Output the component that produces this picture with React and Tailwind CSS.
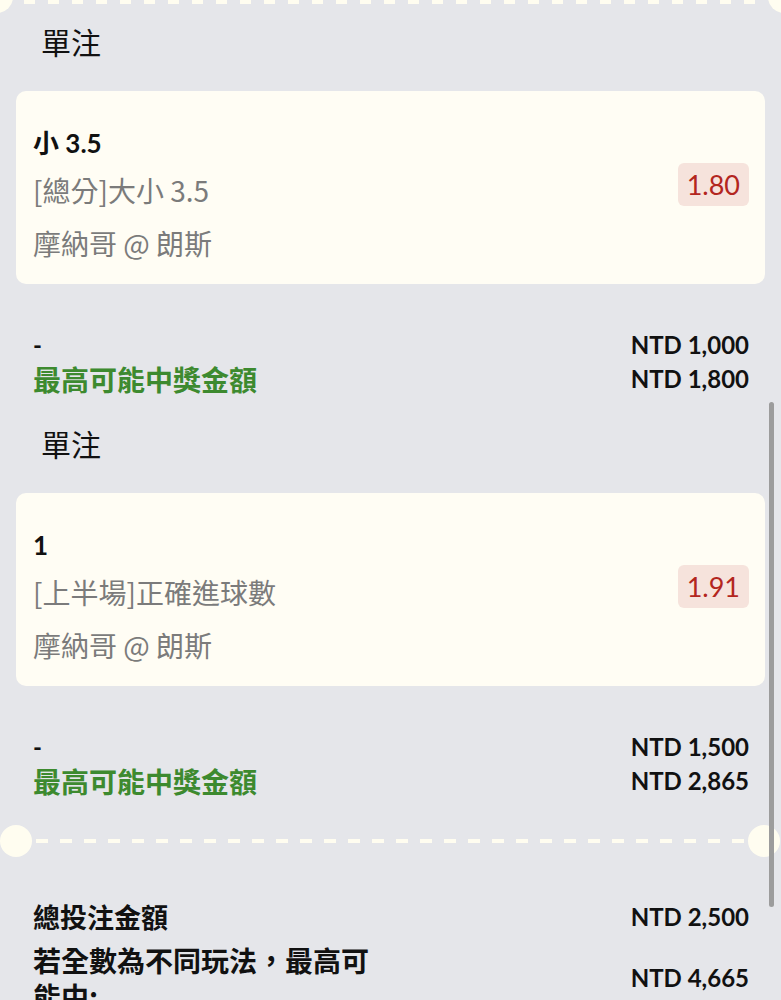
import React from "react";

const LAT = "font-['Lato','Noto_Sans_CJK_TC',sans-serif]";
const CJK = "font-['Noto_Sans_CJK_TC','Noto_Sans',sans-serif]";

const bets = [
  { pick: "小 3.5", market: "[總分]大小 3.5", match: "摩納哥 @ 朗斯", odds: "1.80", stake: "NTD 1,000", win: "NTD 1,800" },
  { pick: "1", market: "[上半場]正確進球數", match: "摩納哥 @ 朗斯", odds: "1.91", stake: "NTD 1,500", win: "NTD 2,865" },
];

function Section({ b }) {
  return (
    <div className="pb-[6px]">
      <div className={`${CJK} pl-[41px] pt-[21px] h-[61px] text-[30px] leading-[40px] text-[#111]`}>單注</div>
      <div className="mx-[16px] mt-[30px] h-[193px] rounded-[10px] bg-[#fffdf4] pl-[17px] pr-[16px] flex items-start justify-between">
        <div className="flex flex-col pt-[34px]">
          <div className={`${LAT} font-bold text-[26px] leading-[36px] text-[#111]`}>{b.pick}</div>
          <div className={`${CJK} text-[28px] leading-[46px] text-[#7b7b7b] mt-[6px]`}>{b.market}</div>
          <div className={`${CJK} text-[28px] leading-[46px] text-[#7b7b7b] mt-[7px]`}>{b.match}</div>
        </div>
        <div className={`${LAT} self-center mb-[6px] h-[43px] px-[9px] rounded-[6px] bg-[#f6e3dc] text-[#b3261e] text-[27px] leading-[43px]`}>{b.odds}</div>
      </div>
      <div className="pt-[44px] pl-[33px] pr-[32px]">
        <div className="flex justify-between h-[34px] items-center">
          <span className={`${LAT} font-bold text-[24px] text-[#111]`}>-</span>
          <span className={`${LAT} font-bold text-[24px] text-[#111]`}>{b.stake}</span>
        </div>
        <div className="flex justify-between h-[34px] items-center">
          <span className={`${CJK} font-bold text-[28px] text-[#3d8a2f]`}>最高可能中獎金額</span>
          <span className={`${LAT} font-bold text-[24px] text-[#111]`}>{b.win}</span>
        </div>
      </div>
    </div>
  );
}

export default function App() {
  return (
    <div className="relative w-full h-[1000px] overflow-hidden bg-[#e5e6ea]">
      {/* top ticket edge */}
      <div className="relative h-0">
        <div className="absolute left-[-19px] top-[-19px] w-[32px] h-[32px] rounded-full bg-[#fffdf0]" />
        <div className="absolute right-[-19px] top-[-19px] w-[32px] h-[32px] rounded-full bg-[#fffdf0]" />
        <div className="absolute left-[24px] right-[24px] top-0 h-[4px] bg-[repeating-linear-gradient(90deg,#fffdf0_0_11px,transparent_11px_24px)]" />
      </div>

      {bets.map((b, i) => (
        <Section key={i} b={b} />
      ))}

      {/* separator */}
      <div className="relative mt-[21px] h-[32px] flex items-center">
        <div className="w-[32px] h-[32px] rounded-full bg-[#fffdf0] shrink-0" />
        <div className="flex-1 mx-[4px] h-[4px] bg-[repeating-linear-gradient(90deg,#fffdf0_0_12px,transparent_12px_24px)]" />
        <div className="w-[32px] h-[32px] rounded-full bg-[#fffdf0] shrink-0 mr-[1px]" />
      </div>

      {/* totals */}
      <div className="pl-[33px] pr-[32px] pt-[40px]">
        <div className="flex justify-between items-center h-[40px]">
          <span className={`${CJK} font-bold text-[27px] text-[#111]`}>總投注金額</span>
          <span className={`${LAT} font-bold text-[24px] text-[#111]`}>NTD 2,500</span>
        </div>
        <div className="flex justify-between items-center mt-[5px]">
          <span className={`${CJK} font-bold text-[28px] leading-[36px] text-[#111] w-[345px]`}>若全數為不同玩法，最高可能中:</span>
          <span className={`${LAT} font-bold text-[24px] text-[#111]`}>NTD 4,665</span>
        </div>
      </div>

      {/* scrollbar */}
      <div className="absolute left-[769px] top-[402px] w-[5px] h-[505px] rounded-full bg-[#9c9c9c]" />
    </div>
  );
}
